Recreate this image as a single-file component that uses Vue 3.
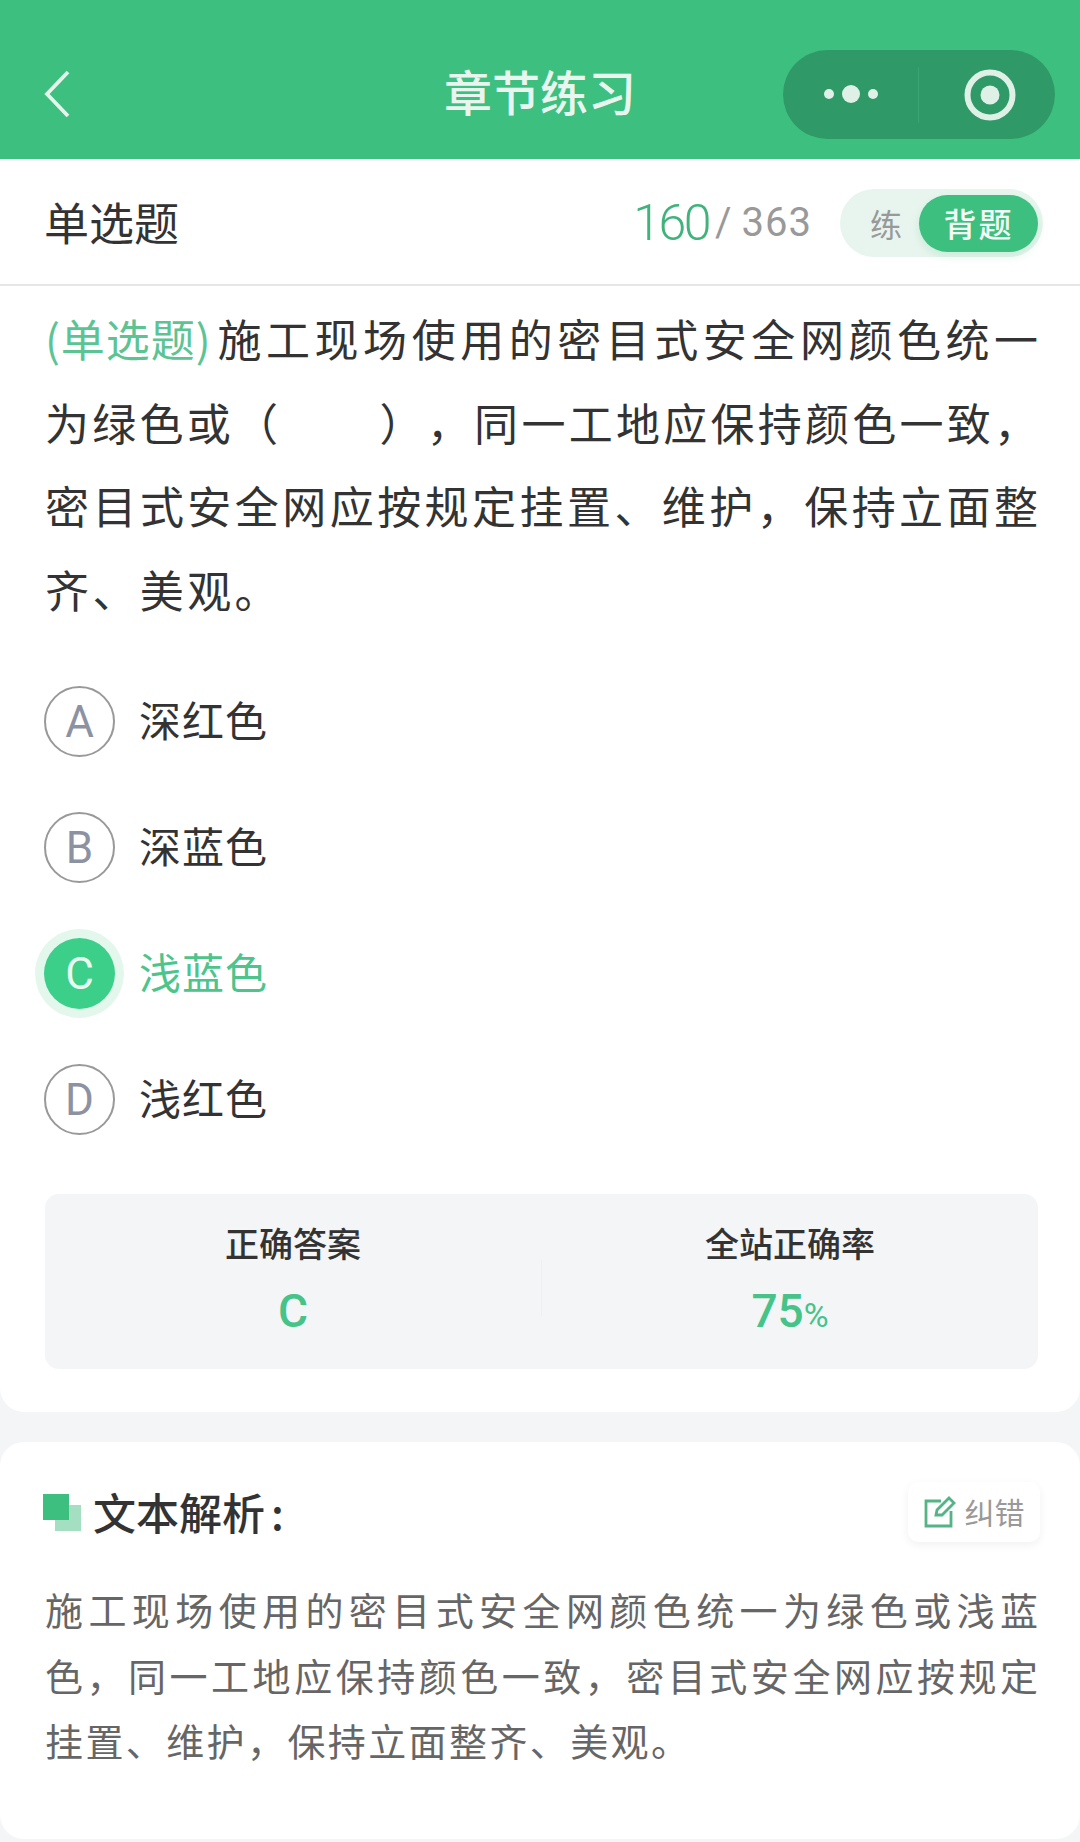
<script setup>
const options = [
  { key: 'A', text: '深红色' },
  { key: 'B', text: '深蓝色' },
  { key: 'C', text: '浅蓝色', on: true },
  { key: 'D', text: '浅红色' },
]
</script>

<template>
  <div class="page">
    <header class="nav">
      <svg class="back" width="26" height="48" viewBox="0 0 26 48"><path d="M24 2 3 24l21 22" fill="none" stroke="#e6f5ec" stroke-width="3.8"/></svg>
      <h1 class="title">章节练习</h1>
      <div class="capsule">
        <svg class="cap-left" width="135" height="89" viewBox="0 0 135 89"><circle cx="46" cy="44" r="5" fill="#dff0e6"/><circle cx="68" cy="44" r="9" fill="#dff0e6"/><circle cx="90" cy="44" r="5" fill="#dff0e6"/></svg>
        <span class="cap-line"></span>
        <svg class="cap-right" width="136" height="89" viewBox="0 0 136 89"><circle cx="71" cy="45" r="22.500" fill="none" stroke="#dff0e6" stroke-width="6"/><circle cx="71" cy="45" r="9.500" fill="#dff0e6"/></svg>
      </div>
    </header>

    <section class="card first">
      <div class="bar">
        <span class="kind">单选题</span>
        <div class="count"><b>160</b><i>/</i><span>363</span></div>
        <div class="toggle"><span class="t-off">练</span><span class="t-on">背题</span></div>
      </div>
      <div class="question">
        <p class="q-line full"><span class="q-tag">(单选题)</span>施工现场使用的密目式安全网颜色统一</p>
        <p class="q-line full">为绿色或（<span class="q-gap"></span>），同一工地应保持颜色一致，</p>
        <p class="q-line full">密目式安全网应按规定挂置、维护，保持立面整</p>
        <p class="q-line">齐、美观。</p>
      </div>
      <ul class="options">
        <li v-for="o in options" :key="o.key" class="option" :class="{ on: o.on }">
          <span class="letter">{{ o.key }}</span>
          <span class="o-text">{{ o.text }}</span>
        </li>
      </ul>
      <div class="stats">
        <div class="stat"><span class="s-label">正确答案</span><span class="s-value">C</span></div>
        <span class="s-line"></span>
        <div class="stat"><span class="s-label">全站正确率</span><span class="s-value">75<small>%</small></span></div>
      </div>
    </section>

    <section class="card second">
      <div class="a-head">
        <span class="mark"><span class="mark-a"></span><span class="mark-b"></span></span>
        <h2 class="a-title">文本解析<span class="colon">:</span></h2>
        <div class="report">
          <svg width="32" height="32" viewBox="0 0 32 32" fill="none" stroke="#55b486" stroke-width="2.800"><path d="M17 5H2v25h25V15"/><path d="m12 19 1-5L25 2l5 5-12 12z"/></svg>
          <span class="r-text">纠错</span>
        </div>
      </div>
      <div class="a-body">
        <p class="a-line full">施工现场使用的密目式安全网颜色统一为绿色或浅蓝</p>
        <p class="a-line full">色，同一工地应保持颜色一致，密目式安全网应按规定</p>
        <p class="a-line">挂置、维护，保持立面整齐、美观。</p>
      </div>
    </section>
  </div>
</template>

<style>
html, body { margin: 0; background: #f4f5f7; }
</style>

<style scoped>
.page {
  width: 1080px;
  height: 1842px;
  overflow: hidden;
  background: #f4f5f7;
  font-family: "Noto Sans CJK SC", sans-serif;
  color: #333;
  text-spacing-trim: space-all;
}
h1, h2, p, ul { margin: 0; padding: 0; }
.nav {
  height: 159px;
  background: #3dbf7f;
  display: flex;
  align-items: center;
  position: relative;
  padding: 0 25px 0 44px;
  box-sizing: border-box;
}
.back { margin-top: 29px; }
.title {
  position: absolute;
  left: 0;
  right: 0;
  top: 62px;
  text-align: center;
  font-size: 48px;
  line-height: 56px;
  font-weight: 500;
  color: #e9f6ef;
}
.capsule {
  margin-left: auto;
  margin-top: 30px;
  width: 272px;
  height: 89px;
  border-radius: 45px;
  background: #2f9a68;
  display: flex;
  align-items: center;
}
.cap-line { width: 1px; height: 56px; background: #3aa573; }
.card { background: #fff; }
.first { border-radius: 0 0 24px 24px; height: 1253px; }
.bar {
  height: 125px;
  border-bottom: 2px solid #e6e6e8;
  display: flex;
  align-items: center;
  padding: 0 37px 0 44px;
}
.kind { font-size: 45px; line-height: 60px; color: #333; }
.count {
  margin-left: auto;
  margin-top: 2px;
  display: flex;
  align-items: center;
  font-family: Roboto, sans-serif;
  color: #999;
  font-weight: 400;
  font-size: 40px;
  letter-spacing: 1px;
}
.count b { font-size: 50px; font-weight: 300; color: #3fb37b; letter-spacing: -2.500px; }
.count i { font-style: normal; margin: 0 9px 0 6px; }
.toggle {
  margin-left: 28px;
  margin-top: 3px;
  width: 203px;
  height: 68px;
  border-radius: 34px;
  background: #e8f5ee;
  display: flex;
  align-items: center;
  box-sizing: border-box;
  padding: 0 5px 0 30px;
}
.t-off { font-size: 32px; color: #999; }
.t-on {
  margin-left: auto;
  width: 119px;
  height: 57px;
  border-radius: 29px;
  background: #3dbf7f;
  color: #f2fbf6;
  font-size: 33px;
  font-weight: 500;
  line-height: 57px;
  text-align: center;
  letter-spacing: 2px;
  box-shadow: 0 4px 10px rgba(61, 191, 127, .18);
}
.question { padding: 11px 42px 0 45px; }
.q-line {
  font-size: 44px;
  line-height: 83.500px;
  letter-spacing: 3.400px;
  color: #333;
}
.full {
  letter-spacing: 0;
  text-align: justify;
  text-align-last: justify;
}
.q-tag {
  display: inline-block;
  width: 168px;
  color: #5cc493;
  letter-spacing: 1px;
  text-align-last: left;
}
.q-gap { display: inline-block; width: 95px; }
.options {
  list-style: none;
  padding: 55px 0 0 44px;
  display: flex;
  flex-direction: column;
  gap: 55px;
}
.option {
  display: flex;
  align-items: center;
  height: 71px;
}
.letter {
  width: 71px;
  height: 71px;
  box-sizing: border-box;
  border: 2.500px solid #999;
  border-radius: 50%;
  display: flex;
  align-items: center;
  justify-content: center;
  font-family: Roboto, sans-serif;
  font-size: 44px;
  font-weight: 400;
  color: #8d92a3;
}
.o-text {
  margin-left: 24px;
  padding-bottom: 7px;
  font-size: 42px;
  letter-spacing: 1px;
  color: #333;
}
.on .letter {
  background: #3ccf8a;
  border: none;
  color: #e8fbf0;
  box-shadow: 0 0 0 9px #e4f7ec;
}
.on .o-text { color: #4cc48c; }
.stats {
  margin: 59px 42px 0 45px;
  height: 175px;
  border-radius: 14px;
  background: #f4f5f7;
  display: flex;
  align-items: stretch;
}
.stat {
  flex: 1;
  display: flex;
  flex-direction: column;
  align-items: center;
  padding-top: 26px;
}
.s-label { font-size: 34px; line-height: 46px; font-weight: 500; color: #333; }
.s-value {
  margin-top: 18px;
  height: 54px;
  font-family: Roboto, sans-serif;
  font-size: 46px;
  line-height: 54px;
  font-weight: 500;
  color: #46c389;
}
.s-value small { font-size: 34px; font-weight: 400; line-height: 0; }
.s-line { width: 1px; height: 56px; align-self: center; margin-top: 12px; background: #eeeff1; }
.second {
  margin-top: 30px;
  border-radius: 24px;
  height: 397px;
  padding: 40px 42px 0 43px;
  box-sizing: border-box;
}
.a-head { display: flex; align-items: center; height: 60px; }
.mark { position: relative; width: 38px; height: 37px; }
.mark-a, .mark-b { position: absolute; width: 26px; height: 26px; }
.mark-a { left: 0; top: 0; background: #3dbf7f; z-index: 1; }
.mark-b { left: 12px; top: 11px; background: #a3dfc0; }
.a-title {
  margin-left: 12px;
  padding-bottom: 2px;
  font-size: 43px;
  line-height: 56px;
  font-weight: 500;
  color: #333;
}
.colon { margin-left: 6px; }
.report {
  margin-left: auto;
  margin-right: -2px;
  width: 132px;
  height: 60px;
  border-radius: 10px;
  background: #fff;
  box-shadow: 0 3px 10px rgba(0, 0, 0, .06);
  display: flex;
  align-items: center;
  justify-content: center;
  gap: 9px;
  font-size: 30px;
  color: #999;
}
.r-text { padding-bottom: 3px; }
.a-body { margin: 34px 0 0 2px; }
.a-line {
  font-size: 38px;
  line-height: 65.500px;
  letter-spacing: 2.400px;
  color: #666;
}
.a-line.full { letter-spacing: 0; }
</style>
